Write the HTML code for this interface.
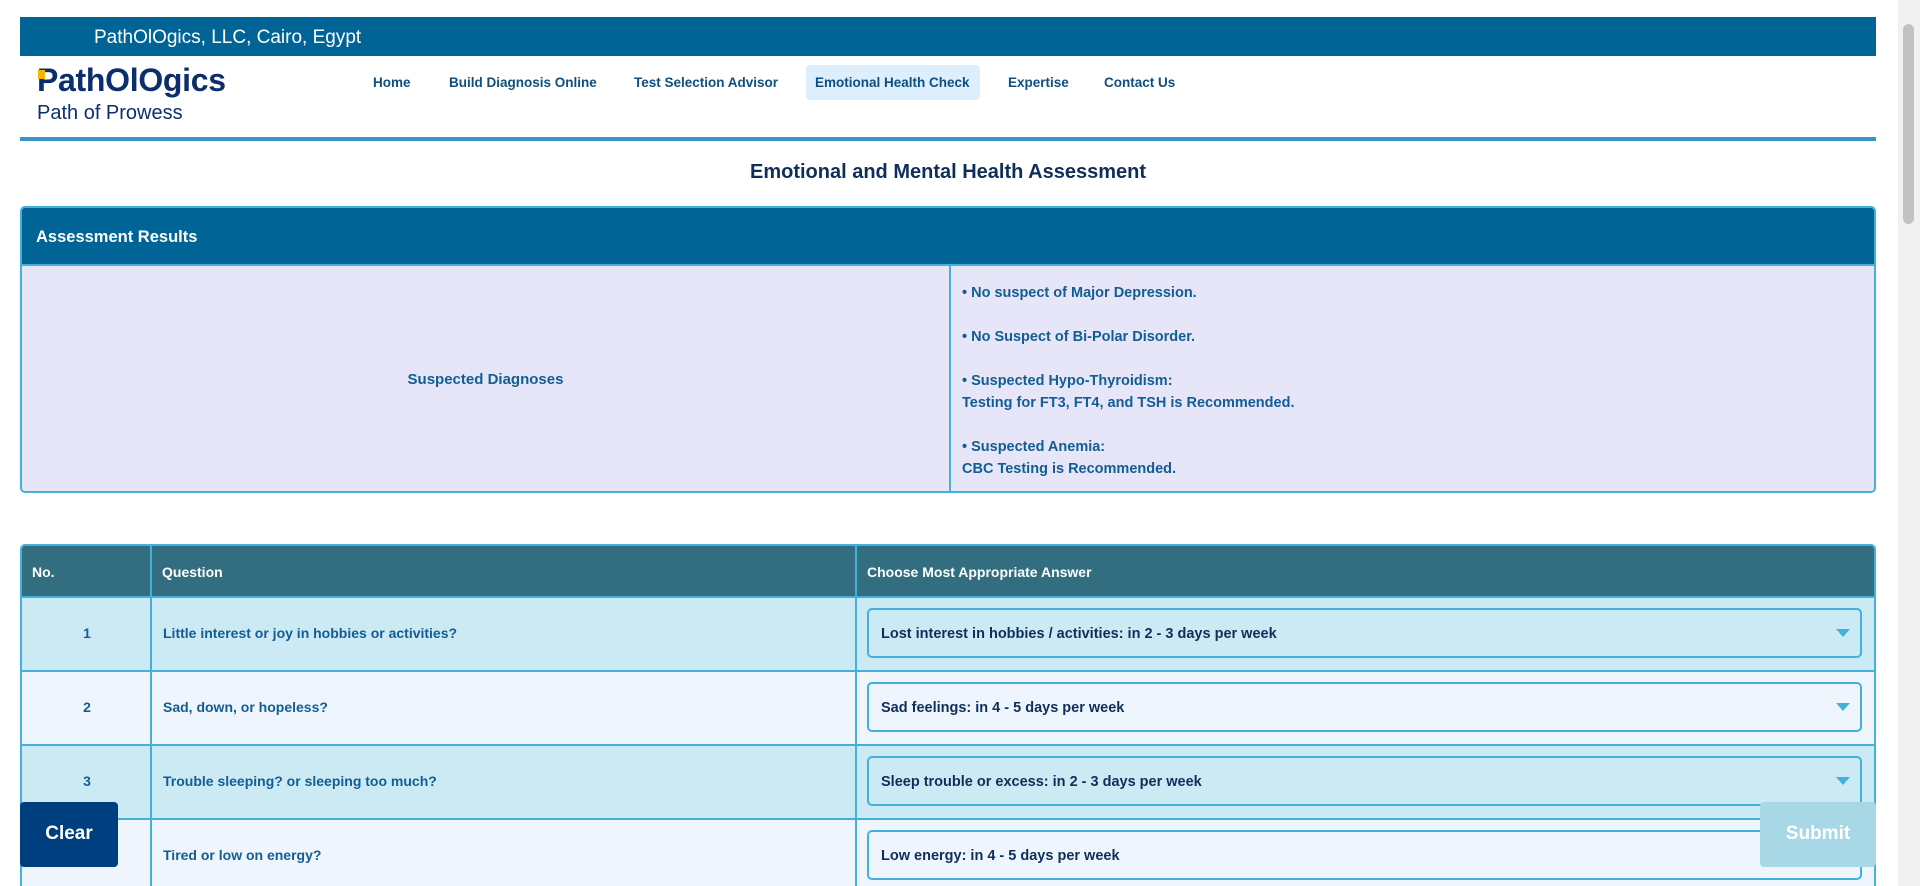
<!DOCTYPE html>
<html style="overflow:hidden;height:886px"><head><meta charset="utf-8"><style>
*{box-sizing:border-box;margin:0;padding:0}
body{width:1920px;height:886px;overflow:hidden;background:#fff;font-family:"Liberation Sans",sans-serif;position:relative}
.abs{position:absolute}
.topbar{left:20px;top:17px;width:1856px;height:39px;background:#006496;color:#fff;font-size:19px;padding:10px 0 0 74px}
.logo{left:37px;top:62px;font-size:32px;font-weight:bold;color:#0d2e6e;letter-spacing:-0.3px}
.logo .y{position:absolute;left:1px;top:8px;width:7px;height:9px;background:#f5b800}
.tag{left:37px;top:102px;font-size:20px;color:#0d2e6e}
.nav{top:75px;font-size:13.5px;font-weight:bold;color:#0f4f7f}
.navhl{left:806px;top:65px;width:174px;height:35px;background:#ddeefc;border-radius:4px}
.line{left:20px;top:137px;width:1856px;height:4px;background:#3795c8}
.title{left:0;width:1896px;top:161px;text-align:center;font-size:20px;font-weight:bold;color:#0f2f5a}
.res{left:20px;top:206px;width:1856px;height:287px;border:2px solid #44b0dc;border-radius:5px;overflow:hidden;background:#e6e6f8}
.res .hd{height:58px;background:#006496;color:#fff;font-weight:bold;font-size:16.5px;padding:20px 0 0 14px;border-bottom:2px solid #44b0dc}
.res .div{position:absolute;left:927px;top:58px;width:2px;height:230px;background:#44b0dc}
.res .l{position:absolute;left:0;width:927px;top:163px;text-align:center;font-size:15px;font-weight:bold;color:#125d94}
.res .r{position:absolute;left:940px;top:74px;font-size:14.5px;font-weight:bold;color:#125d94;line-height:22px}
.tbl{left:20px;top:544px;width:1856px;height:342px;border:2px solid #44b0dc;border-bottom:none;border-radius:5px 5px 0 0;overflow:hidden}
.th{position:absolute;top:0;height:52px;background:#336e80;color:#fff;font-size:14px;font-weight:bold;padding:18px 0 0 10px}
.row{position:absolute;left:0;width:1852px;height:74px;border-top:2px solid #44b0dc}
.c{position:absolute;top:0;height:70px;font-size:14px;font-weight:bold;color:#125d94;padding-top:27px}
.vl{position:absolute;top:0;width:2px;height:340px;background:#44b0dc}
.sel{position:absolute;left:845px;top:10px;width:995px;height:50px;border:2px solid #44b0dc;border-radius:5px;font-size:14.5px;font-weight:bold;color:#0f2f5a;padding:16px 0 0 12px}
.sel:after{content:"";position:absolute;right:10px;top:19px;border-left:7px solid transparent;border-right:7px solid transparent;border-top:8px solid #44b0dc}
.btn{font-size:19px;font-weight:bold;color:#fff;text-align:center;border-radius:4px}
.sb{left:1898px;top:0;width:22px;height:886px;background:#f1f1f1}
</style></head><body>
<div class="abs topbar">PathOlOgics, LLC, Cairo, Egypt</div>
<div class="abs logo"><span class="y"></span>PathOlOgics</div>
<div class="abs tag">Path of Prowess</div>
<div class="abs navhl"></div>
<div class="abs nav" style="left:373px">Home</div>
<div class="abs nav" style="left:449px">Build Diagnosis Online</div>
<div class="abs nav" style="left:634px">Test Selection Advisor</div>
<div class="abs nav" style="left:815px">Emotional Health Check</div>
<div class="abs nav" style="left:1008px">Expertise</div>
<div class="abs nav" style="left:1104px">Contact Us</div>
<div class="abs line"></div>
<div class="abs title">Emotional and Mental Health Assessment</div>
<div class="abs res">
<div class="hd">Assessment Results</div>
<div class="div"></div>
<div class="l">Suspected Diagnoses</div>
<div class="r">• No suspect of Major Depression.<br><br>• No Suspect of Bi-Polar Disorder.<br><br>• Suspected Hypo-Thyroidism:<br>Testing for FT3, FT4, and TSH is Recommended.<br><br>• Suspected Anemia:<br>CBC Testing is Recommended.</div>
</div>
<div class="abs tbl">
<div class="th" style="left:0;width:1852px">No.</div>
<div class="th" style="left:130px">Question</div>
<div class="th" style="left:835px">Choose Most Appropriate Answer</div>
<div class="row" style="top:50px;background:#cceaf4"><div class="c" style="left:0;width:130px;text-align:center">1</div><div class="c" style="left:141px">Little interest or joy in hobbies or activities?</div><div class="sel">Lost interest in hobbies / activities: in 2 - 3 days per week</div></div>
<div class="row" style="top:124px;background:#eef5fd"><div class="c" style="left:0;width:130px;text-align:center">2</div><div class="c" style="left:141px">Sad, down, or hopeless?</div><div class="sel">Sad feelings: in 4 - 5 days per week</div></div>
<div class="row" style="top:198px;background:#cceaf4"><div class="c" style="left:0;width:130px;text-align:center">3</div><div class="c" style="left:141px">Trouble sleeping? or sleeping too much?</div><div class="sel">Sleep trouble or excess: in 2 - 3 days per week</div></div>
<div class="row" style="top:272px;height:70px;background:#eef5fd"><div class="c" style="left:0;width:130px;text-align:center">4</div><div class="c" style="left:141px">Tired or low on energy?</div><div class="sel">Low energy: in 4 - 5 days per week</div></div>
<div class="vl" style="left:128px"></div>
<div class="vl" style="left:833px"></div>
</div>
<div class="abs btn" style="left:20px;top:802px;width:98px;height:65px;background:#003f7f;padding-top:21px">Clear</div>
<div class="abs btn" style="left:1760px;top:802px;width:116px;height:65px;background:#a8d8e6;padding-top:21px">Submit</div>
<div class="abs sb"><div style="position:absolute;left:5px;top:24px;width:11px;height:200px;background:#c1c1c1;border-radius:6px"></div></div>
</body></html>
